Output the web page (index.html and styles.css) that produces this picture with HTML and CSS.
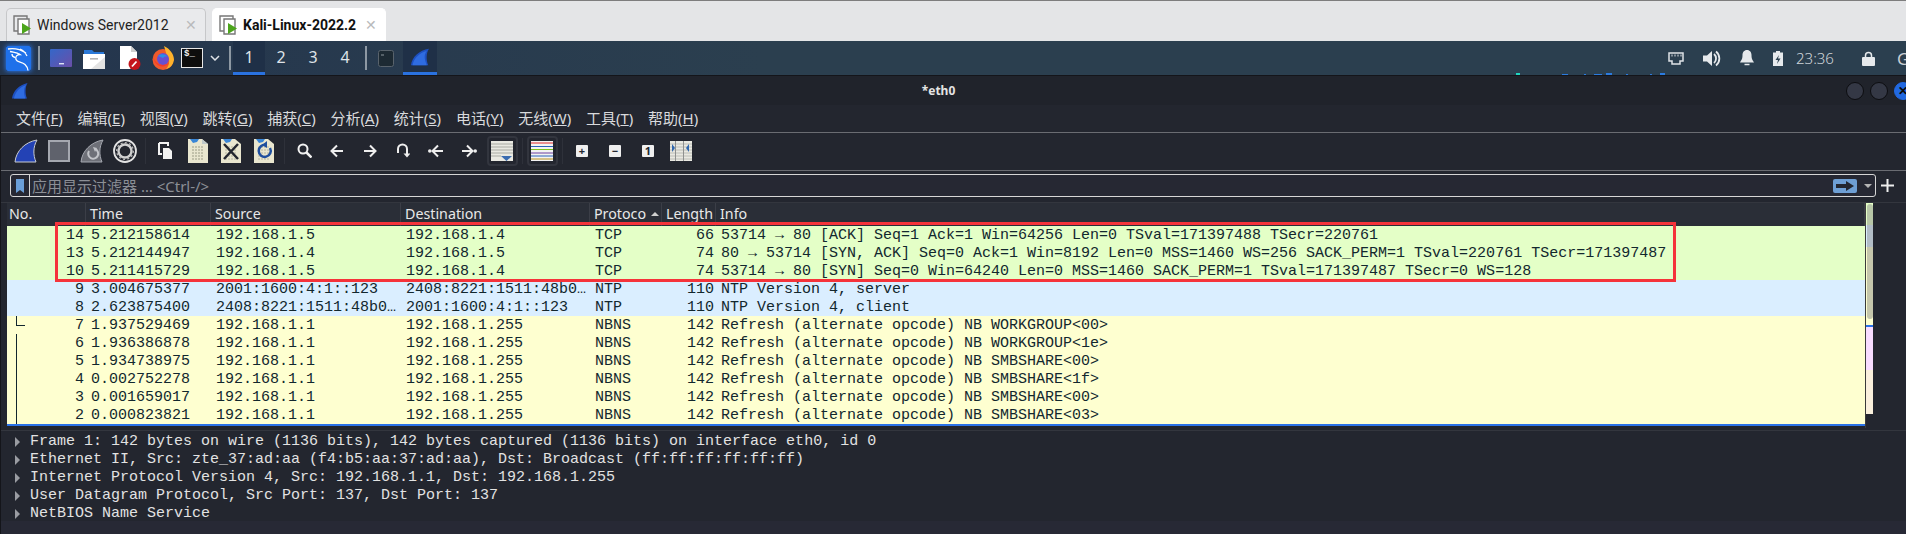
FILE: index.html
```html
<!DOCTYPE html>
<html lang="en">
<head>
    <meta charset="UTF-8" />
    <meta name="viewport" content="width=device-width, initial-scale=1" />
    <title>Kali-Linux-2022.2 - eth0</title>
    <link rel="stylesheet" href="styles.css">
</head>
<body>

    <!-- VM tabs -->
    <div class="vm-tabs">
        <div class="vm-tab">
            <svg class="vm-icon" viewBox="0 0 20 20"><path d="M5 16H1V1h13v3" fill="none" stroke="#777" stroke-width="1.4"/><path d="M5 4h11v15H5z" fill="#fff" stroke="#777" stroke-width="1.4"/><path d="M9 8l9 5.5-9 5.5z" fill="#4ca51c"/></svg>
            <span class="vm-name">Windows Server2012</span>
            <span class="vm-close">✕</span>
        </div>
        <div class="vm-tab active">
            <svg class="vm-icon" viewBox="0 0 20 20"><path d="M5 16H1V1h13v3" fill="none" stroke="#777" stroke-width="1.4"/><path d="M5 4h11v15H5z" fill="#fff" stroke="#777" stroke-width="1.4"/><path d="M9 8l9 5.5-9 5.5z" fill="#4ca51c"/></svg>
            <span class="vm-name">Kali-Linux-2022.2</span>
            <span class="vm-close">✕</span>
        </div>
    </div>

    <!-- Kali panel -->
    <div class="panel">
        <div class="panel-logo">
            <svg viewBox="0 0 25 25" width="25" height="25"><rect width="25" height="25" rx="2" fill="#1f71ea"/><path d="M2 3c6-1 12 0 18 4M4 5.500c4 1 7 1 10 3-3 0-5 2-4 5 1 3 6 2 9 5 2 2 3 4 3 6M6 8c0 2 1 3 3 3.500M14 3c3 1 5 3 7 7" fill="none" stroke="#fff" stroke-width="1.300"/></svg>
        </div>
        <span class="panel-sep"></span>
        <div class="panel-app">
            <svg viewBox="0 0 22 18" width="22" height="18"><defs><linearGradient id="desk" x1="0" x2="1" y1="0" y2="1"><stop offset="0" stop-color="#3467c9"/><stop offset="1" stop-color="#6a4fa8"/></linearGradient></defs><rect y="0" width="22" height="18" rx="1" fill="url(#desk)"/><rect x="9" y="14" width="5" height="1.4" fill="#dfe4f5"/></svg>
        </div>
        <div class="panel-app">
            <svg viewBox="0 0 22 22" width="22" height="22"><path d="M1 3h8l2 2h10v4H1z" fill="#2b79d8"/><path d="M0 7h22v15H0z" fill="#fff"/><path d="M22 10v12H8z" fill="#e3e3e3"/><rect x="7" y="11" width="8" height="1.6" fill="#b5b5b5"/></svg>
        </div>
        <div class="panel-app shifted">
            <svg viewBox="0 0 22 24" width="22" height="24"><path d="M1 0h11l6 6v17H1z" fill="#fff"/><path d="M12 0l6 6h-6z" fill="#cfcfcf"/><circle cx="15.500" cy="18" r="6" fill="#c4161c"/><path d="M13 20.500l4.500-5" stroke="#fff" stroke-width="1.800"/></svg>
        </div>
        <div class="panel-app">
            <svg viewBox="0 0 22 24" width="22" height="24"><circle cx="11" cy="13.500" r="10.500" fill="#ef5a2c"/><path d="M12 0c6 3 10 8 10 14a11 11 0 0 1-8 9c4-4 4-10 1-13z" fill="#fdb22c"/><circle cx="11" cy="13" r="6" fill="#6a4fd0"/><path d="M6 10c3-3 8-2 10 1-3-1-4 0-5 1z" fill="#2a8fe8"/><path d="M1 11c3 8 10 10 16 6-5 6-14 4-16-6z" fill="#f5392d"/></svg>
        </div>
        <div class="panel-term">$_</div>
        <svg class="panel-chev" viewBox="0 0 10 6" width="10" height="6"><path d="M1 1l4 4 4-4" fill="none" stroke="#dfe3e8" stroke-width="1.500"/></svg>
        <span class="panel-sep"></span>
        <div class="workspaces">
            <span class="workspace current">1</span>
            <span class="workspace">2</span>
            <span class="workspace">3</span>
            <span class="workspace">4</span>
        </div>
        <span class="panel-sep"></span>
        <div class="task">
            <svg viewBox="0 0 16 17" width="16" height="17"><rect x=".5" y=".5" width="15" height="16" rx="2" fill="#1d2a33" stroke="#59636c"/><path d="M3 5h3" stroke="#8d969d"/></svg>
        </div>
        <div class="task open">
            <svg viewBox="0 0 26 24" width="20" height="18"><path d="M1 23C2 12 12 3 25 1c-4 6-4 15-1 22z" fill="#1e50c0"/><path d="M3 23C5 13 13 6 22 4c-5 6-2 13 0 19z" fill="#2f6ce0"/></svg>
        </div>
        <div class="panel-tray">
            <svg viewBox="0 0 16 13" width="16" height="13"><path d="M1 1h14v8h-3v3H4V9H1z" fill="none" stroke="#dfe3e8" stroke-width="1.500"/><path d="M4 2.500v2M7 2.500v2M10 2.500v2M13 2.500v2" stroke="#dfe3e8"/></svg>
            <svg viewBox="0 0 18 17" width="18" height="17"><path d="M0 5.500h4L9 1v15l-5-4.500H0z" fill="#e6e9ec"/><path d="M11 4a6 6 0 0 1 0 9M13 1.500a9 9 0 0 1 0 14" fill="none" stroke="#e6e9ec" stroke-width="1.800"/></svg>
            <svg viewBox="0 0 14 16" width="14" height="16"><path d="M7 0c3 0 4.500 2.500 4.500 5 0 4 1 5 2.500 7.500H0C1.500 10 2.500 9 2.500 5 2.500 2.500 4 0 7 0z" fill="#e6e9ec"/><path d="M4.500 14.500h5" stroke="#e6e9ec" stroke-width="1.500"/></svg>
            <svg viewBox="0 0 10 15" width="10" height="15"><path d="M3 0h4v1.500h3V15H0V1.500h3z" fill="#e6e9ec"/><path d="M6 4L2.500 9H5l-1 4 3.500-5.500H5z" fill="#2b3f4e"/></svg>
            <span class="clock">23:36</span>
            <span class="panel-sep"></span>
            <svg viewBox="0 0 13 15" width="13" height="15"><path d="M3.500 7V4.500a3 3 0 0 1 6 0V7" fill="none" stroke="#e6e9ec" stroke-width="1.500"/><rect y="6" width="13" height="9" rx="1" fill="#e6e9ec"/></svg>
            <span class="user">G</span>
        </div>
        <!-- bits of desktop wallpaper showing under the panel -->
        <svg class="wallpaper-bits" viewBox="0 0 150 2" width="150" height="2"><path d="M0 0h4v2H0z" fill="#1fd6c0"/><path d="M46 1h6v1h-6zM68 1h2v1h-2zM78 1h8v1h-8zM90 0h6v2h-6zM110 1h2v1h-2zM134 1h2v1h-2zM144 0h5v2h-5z" fill="#2b7be0"/></svg>
    </div>

    <!-- Wireshark window -->
    <div class="window">
        <div class="titlebar">
            <svg class="title-icon" viewBox="0 0 16 16" width="16" height="16"><path d="M0 15.500C1 8 7 2 15.500 0c-2.500 4-2.500 11-.5 15.500z" fill="#1e50c0"/><path d="M2 15.500C3 9 8 4 14 2c-3 4-2 10-.5 13.500z" fill="#2f6ce0"/></svg>
            <span class="title-text">*eth0</span>
            <div class="title-buttons">
                <span class="win-btn"></span>
                <span class="win-btn"></span>
                <span class="win-btn close">✕</span>
            </div>
        </div>

        <div class="menubar">
            <span>文件(<u>F</u>)</span>
            <span>编辑(<u>E</u>)</span>
            <span>视图(<u>V</u>)</span>
            <span>跳转(<u>G</u>)</span>
            <span>捕获(<u>C</u>)</span>
            <span>分析(<u>A</u>)</span>
            <span>统计(<u>S</u>)</span>
            <span>电话(<u>Y</u>)</span>
            <span>无线(<u>W</u>)</span>
            <span>工具(<u>T</u>)</span>
            <span>帮助(<u>H</u>)</span>
        </div>

        <div class="toolbar">
            <div class="tool-group">
                <span class="tool"><svg viewBox="0 0 24 24" width="24" height="24"><path d="M1 23C2 12 11 3 23 1c-4 7-4 15-1 22z" fill="#2342b5" stroke="#c9ccd2"/></svg></span>
                <span class="tool"><svg viewBox="0 0 22 22" width="22" height="22"><rect x="1" y="1" width="20" height="20" fill="#5f626c" stroke="#a5a8b0" stroke-width="2"/></svg></span>
                <span class="tool"><svg viewBox="0 0 24 24" width="24" height="24"><path d="M1 23C2 12 11 3 23 1c-4 7-4 15-1 22z" fill="#6e7078" stroke="#a5a8b0"/><path d="M15 10a5 5 0 1 1-6 2" fill="none" stroke="#c2c4c9" stroke-width="2"/><path d="M13 8l4 1-2 4z" fill="#c2c4c9"/></svg></span>
                <span class="tool"><svg viewBox="0 0 24 24" width="24" height="24"><circle cx="12" cy="12" r="11" fill="none" stroke="#e4e4e4" stroke-width="1.800"/><circle cx="12" cy="12" r="6.500" fill="none" stroke="#d0d0d0" stroke-width="2.400"/><circle cx="12" cy="12" r="8.300" fill="none" stroke="#b5b5b5" stroke-width="1.400" stroke-dasharray="2 2.300"/></svg></span>
            </div>
            <span class="tool-sep"></span>
            <div class="tool-group">
                <span class="tool"><svg viewBox="0 0 15 17" width="15" height="17"><path d="M1 1h9v3M1 1v11h3" fill="none" stroke="#f2f2f2" stroke-width="2"/><path d="M5 6h6l3 3v8H5z" fill="#f2f2f2"/></svg></span>
                <span class="tool"><svg viewBox="0 0 20 24" width="20" height="24"><path d="M0 0h14l6 5v19H0z" fill="#e9e6cf"/><path d="M2 0h9l-2 3-4 1z" fill="#3a86d6"/><path d="M14 0l6 5h-6z" fill="#bfc9c9"/><path d="M4 8h12M4 11h12M4 14h12M4 17h12M4 20h12" stroke="#9c9c86" stroke-dasharray="2 1"/></svg></span>
                <span class="tool"><svg viewBox="0 0 20 24" width="20" height="24"><path d="M0 0h14l6 5v19H0z" fill="#e9e6cf"/><path d="M2 0h9l-2 3-4 1z" fill="#3a86d6"/><path d="M4 8h12M4 11h12M4 14h12M4 17h12M4 20h12" stroke="#b5b5a0" stroke-dasharray="2 1"/><path d="M3 5l14 15M17 5L3 20" stroke="#23262f" stroke-width="2.500"/></svg></span>
                <span class="tool"><svg viewBox="0 0 20 24" width="20" height="24"><path d="M0 0h14l6 5v19H0z" fill="#e9e6cf"/><path d="M2 0h9l-2 3-4 1z" fill="#3a86d6"/><path d="M4 8h12M4 11h12M4 14h12M4 17h12M4 20h12" stroke="#b5b5a0" stroke-dasharray="2 1"/><path d="M12 6a6 6 0 1 0 4 3" fill="none" stroke="#1f4f9e" stroke-width="2.500"/><path d="M8 6l5-4v7z" fill="#1f4f9e"/></svg></span>
            </div>
            <span class="tool-sep"></span>
            <div class="tool-group">
                <span class="tool"><svg viewBox="0 0 15 15" width="15" height="15"><circle cx="6" cy="6" r="4.500" fill="none" stroke="#f2f2f2" stroke-width="2"/><path d="M9.500 9.500l5 5" stroke="#f2f2f2" stroke-width="2.500"/></svg></span>
                <span class="tool"><svg viewBox="0 0 14 14" width="14" height="14"><path d="M13 7H2M7 1.500L1.500 7 7 12.500" fill="none" stroke="#eee" stroke-width="2"/></svg></span>
                <span class="tool"><svg viewBox="0 0 14 14" width="14" height="14"><path d="M1 7h11M7 1.500L12.500 7 7 12.500" fill="none" stroke="#eee" stroke-width="2"/></svg></span>
                <span class="tool"><svg viewBox="0 0 14 15" width="14" height="15"><path d="M2 10V6a4.500 4.500 0 0 1 9 0v5" fill="none" stroke="#eee" stroke-width="2"/><path d="M7.500 10.500h7L11 14.500z" fill="#eee"/></svg></span>
                <span class="tool"><svg viewBox="0 0 16 14" width="16" height="14"><circle cx="1.800" cy="7" r="1.800" fill="#eee"/><path d="M15 7H5M10 1.500L4.500 7l5.500 5.500" fill="none" stroke="#eee" stroke-width="2"/></svg></span>
                <span class="tool"><svg viewBox="0 0 16 14" width="16" height="14"><circle cx="14.200" cy="7" r="1.800" fill="#eee"/><path d="M1 7h10M6 1.500L11.500 7 6 12.500" fill="none" stroke="#eee" stroke-width="2"/></svg></span>
            </div>
            <span class="tool boxed"><svg viewBox="0 0 22 20" width="22" height="20"><rect width="22" height="20" fill="#e9e9e2"/><path d="M0 3h22M0 6h22M0 9h22M0 12h22M0 15h10" stroke="#a9aba4"/><path d="M10 15h11l-5.500 5z" fill="#3a6cb0"/></svg></span>
            <span class="tool-sep"></span>
            <span class="tool boxed"><svg viewBox="0 0 22 20" width="22" height="20"><rect width="22" height="20" fill="#f3f3f3"/><path d="M0 2h22" stroke="#e2282c"/><path d="M0 5.500h22" stroke="#2b62b8"/><path d="M0 8.500h22" stroke="#7cc21c"/><path d="M0 12h22" stroke="#6b3fa0"/><path d="M0 15h22" stroke="#2b62b8"/><path d="M0 18h22" stroke="#b8901c"/></svg></span>
            <span class="tool-sep"></span>
            <div class="tool-group">
                <span class="tool"><span class="zoom-key">+</span></span>
                <span class="tool"><span class="zoom-key">−</span></span>
                <span class="tool"><span class="zoom-key">1</span></span>
                <span class="tool"><svg viewBox="0 0 22 20" width="22" height="20"><rect width="22" height="20" fill="#e9e9e2"/><path d="M0 3h22M0 6h22M0 9h22M0 12h22M0 15h22M0 18h22" stroke="#bcbdb6"/><path d="M5.500 0v20M13.500 0v20" stroke="#8f9190"/><path d="M2 3v8l3-4zM19 3v8l-3-4z" fill="#2f66ad"/></svg></span>
            </div>
        </div>

        <div class="filter-row">
            <div class="filter-box">
                <span class="filter-mark"><svg viewBox="0 0 8 14" width="8" height="14"><path d="M0 0h8v14l-4-3-4 3z" fill="#6a9fd8"/></svg></span>
                <span class="filter-hint">应用显示过滤器 … &lt;Ctrl-/&gt;</span>
                <span class="filter-apply"><svg viewBox="0 0 18 10" width="18" height="10"><path d="M0 3h10V0l8 5-8 5V7H0z" fill="#23262f"/></svg></span>
                <span class="filter-drop"></span>
            </div>
            <svg class="filter-add" viewBox="0 0 13 13" width="13" height="13"><path d="M6.500 0v13M0 6.500h13" stroke="#eee" stroke-width="2"/></svg>
        </div>

        <div class="packets">
            <div class="packet-list">
                <div class="cols head">
                    <span>No.</span>
                    <span>Time</span>
                    <span>Source</span>
                    <span>Destination</span>
                    <span class="sorted">Protoco</span>
                    <span>Length</span>
                    <span>Info</span>
                </div>
                <div class="cols row tcp"><span class="num">14</span><span>5.212158614</span><span>192.168.1.5</span><span>192.168.1.4</span><span>TCP</span><span class="num">66</span><span>53714 → 80 [ACK] Seq=1 Ack=1 Win=64256 Len=0 TSval=171397488 TSecr=220761</span></div>
                <div class="cols row tcp"><span class="num">13</span><span>5.212144947</span><span>192.168.1.4</span><span>192.168.1.5</span><span>TCP</span><span class="num">74</span><span>80 → 53714 [SYN, ACK] Seq=0 Ack=1 Win=8192 Len=0 MSS=1460 WS=256 SACK_PERM=1 TSval=220761 TSecr=171397487</span></div>
                <div class="cols row tcp"><span class="num">10</span><span>5.211415729</span><span>192.168.1.5</span><span>192.168.1.4</span><span>TCP</span><span class="num">74</span><span>53714 → 80 [SYN] Seq=0 Win=64240 Len=0 MSS=1460 SACK_PERM=1 TSval=171397487 TSecr=0 WS=128</span></div>
                <div class="cols row ntp"><span class="num">9</span><span>3.004675377</span><span>2001:1600:4:1::123</span><span>2408:8221:1511:48b0…</span><span>NTP</span><span class="num">110</span><span>NTP Version 4, server</span></div>
                <div class="cols row ntp"><span class="num">8</span><span>2.623875400</span><span>2408:8221:1511:48b0…</span><span>2001:1600:4:1::123</span><span>NTP</span><span class="num">110</span><span>NTP Version 4, client</span></div>
                <div class="cols row nbns"><span class="num tree-end">7</span><span>1.937529469</span><span>192.168.1.1</span><span>192.168.1.255</span><span>NBNS</span><span class="num">142</span><span>Refresh (alternate opcode) NB WORKGROUP&lt;00&gt;</span></div>
                <div class="cols row nbns"><span class="num tree-mid">6</span><span>1.936386878</span><span>192.168.1.1</span><span>192.168.1.255</span><span>NBNS</span><span class="num">142</span><span>Refresh (alternate opcode) NB WORKGROUP&lt;1e&gt;</span></div>
                <div class="cols row nbns"><span class="num tree-mid">5</span><span>1.934738975</span><span>192.168.1.1</span><span>192.168.1.255</span><span>NBNS</span><span class="num">142</span><span>Refresh (alternate opcode) NB SMBSHARE&lt;00&gt;</span></div>
                <div class="cols row nbns"><span class="num tree-mid">4</span><span>0.002752278</span><span>192.168.1.1</span><span>192.168.1.255</span><span>NBNS</span><span class="num">142</span><span>Refresh (alternate opcode) NB SMBSHARE&lt;1f&gt;</span></div>
                <div class="cols row nbns"><span class="num tree-mid">3</span><span>0.001659017</span><span>192.168.1.1</span><span>192.168.1.255</span><span>NBNS</span><span class="num">142</span><span>Refresh (alternate opcode) NB SMBSHARE&lt;00&gt;</span></div>
                <div class="cols row nbns"><span class="num tree-mid">2</span><span>0.000823821</span><span>192.168.1.1</span><span>192.168.1.255</span><span>NBNS</span><span class="num">142</span><span>Refresh (alternate opcode) NB SMBSHARE&lt;03&gt;</span></div>
                <div class="selection"></div>
                <div class="highlight-box"></div>
            </div>
            <div class="minimap">
                <span class="map-green"></span>
                <span class="map-blue"></span>
                <span class="map-yellow"></span>
                <span class="map-line"></span>
                <span class="map-pink"></span>
                <span class="map-tan"></span>
                <span class="map-handle"></span>
            </div>
        </div>

        <div class="details">
            <div class="detail"><i></i>Frame 1: 142 bytes on wire (1136 bits), 142 bytes captured (1136 bits) on interface eth0, id 0</div>
            <div class="detail"><i></i>Ethernet II, Src: zte_37:ad:aa (f4:b5:aa:37:ad:aa), Dst: Broadcast (ff:ff:ff:ff:ff:ff)</div>
            <div class="detail"><i></i>Internet Protocol Version 4, Src: 192.168.1.1, Dst: 192.168.1.255</div>
            <div class="detail"><i></i>User Datagram Protocol, Src Port: 137, Dst Port: 137</div>
            <div class="detail"><i></i>NetBIOS Name Service</div>
        </div>
        <div class="statusbar"></div>
    </div>

</body>
</html>
```

FILE: styles.css
```css
html, body {
    margin: 0;
    height: 534px;
    overflow: hidden;
}

body {
    width: 1906px;
    background: #23262f;
    font-family: "Noto Sans", "Noto Sans CJK SC", sans-serif;
    display: flex;
    flex-direction: column;
}

svg {
    display: block;
    flex: none;
}

/* VM tabs */
.vm-tabs {
    height: 40px;
    flex: none;
    display: flex;
    align-items: flex-end;
    gap: 6px;
    padding-left: 6px;
    background: #e4e5e7;
    border-top: 1px solid #7d7d7d;
}

.vm-tab {
    height: 33px;
    width: 200px;
    display: flex;
    align-items: center;
    box-sizing: border-box;
    padding-left: 6px;
    padding-right: 4px;
    background: #e9eaec;
    border: 1px solid #c6c7c9;
    border-bottom: none;
    border-radius: 5px 5px 0 0;
    font-family: Roboto, sans-serif;
    font-size: 14px;
    color: #222;
}

.vm-tab.active {
    width: 174px;
    background: #fff;
    border-color: #fff;
    font-weight: bold;
    color: #111;
}

.vm-icon {
    width: 20px;
    height: 20px;
    margin-right: 4px;
}

.vm-name {
    flex: 1;
    white-space: nowrap;
}

.vm-close {
    width: 20px;
    text-align: center;
    color: #b9babc;
    font-size: 14px;
    font-weight: normal;
}

/* Kali panel */
.panel {
    height: 34px;
    flex: none;
    display: flex;
    align-items: center;
    box-sizing: border-box;
    padding-left: 6px;
    position: relative;
    background: linear-gradient(90deg, #24354d, #2b3f4f 40%);
    color: #e6e9ec;
}

.panel-logo {
    width: 25px;
    height: 25px;
    box-shadow: 0 0 5px #2f80ff;
}

.panel-sep {
    width: 2px;
    height: 24px;
    margin: 0 4px 0 7px;
    background: #8d98a3;
}

.panel-app {
    width: 33px;
    display: flex;
    justify-content: center;
}

.panel-app.shifted {
    margin-left: 3px;
}

.panel-term {
    width: 22px;
    height: 20px;
    box-sizing: border-box;
    margin-left: 2px;
    padding-left: 2px;
    background: #0d0d0d;
    border: 1px solid #e8e8e8;
    font: bold 9px/11px "Liberation Mono", monospace;
    color: #eee;
}

.panel-chev {
    margin: 0 2px 0 7px;
}

.workspaces {
    display: flex;
    height: 34px;
    margin: 0 -3px 0 -2px;
}

.workspace {
    width: 32px;
    line-height: 32px;
    text-align: center;
    font-size: 16px;
    color: #dfe3e8;
}

.workspace.current {
    background: #1f3047;
    border-bottom: 3px solid #2a72e0;
    height: 31px;
}

.task {
    width: 34px;
    height: 34px;
    box-sizing: border-box;
    display: flex;
    align-items: center;
    justify-content: center;
    margin-left: -2px;
}

.task.open {
    margin-left: 0;
    background: #1f3047;
    border-bottom: 3px solid #2a72e0;
}

.panel-tray {
    margin-left: auto;
    display: flex;
    align-items: center;
    gap: 19px;
    width: 238px;
    overflow: hidden;
    flex: none;
}

.clock {
    font-size: 15px;
    font-weight: 300;
    color: #cfd5da;
    margin-left: -6px;
}

.panel-tray .panel-sep {
    margin: 0 -4px 0 -6px;
}

.user {
    font-size: 17px;
    color: #c9ced3;
    margin-left: 3px;
}

.wallpaper-bits {
    position: absolute;
    left: 1516px;
    bottom: 0;
}

/* Wireshark window */
.window {
    flex: 1;
    display: flex;
    flex-direction: column;
    position: relative;
    background: #23262f;
    border-top: 1px solid #14151a;
    border-left: 1px solid #14151a;
}

.window::before {
    content: "";
    position: absolute;
    left: 1px;
    top: 0;
    border-top: 4px solid #2a72e0;
    border-right: 4px solid transparent;
}

.titlebar {
    height: 29px;
    flex: none;
    display: flex;
    align-items: center;
    position: relative;
    padding-left: 11px;
    background: #20232b;
}

.title-text {
    position: absolute;
    left: 0;
    right: 0;
    text-align: center;
    font-size: 12px;
    font-weight: bold;
    color: #e4e4e4;
    padding-right: 30px;
}

.title-buttons {
    margin-left: auto;
    display: flex;
    gap: 6px;
    margin-right: -6px;
}

.win-btn {
    width: 16px;
    height: 16px;
    border-radius: 50%;
    background: #343845;
    border: 1px solid #0c0d10;
    font-size: 12px;
    line-height: 16px;
    text-align: center;
    font-weight: bold;
    color: #0a0a0a;
}

.win-btn.close {
    background: #2168e0;
    border-color: #2168e0;
}

.menubar {
    height: 27px;
    box-sizing: border-box;
    padding: 0 0 2px 15px;
    flex: none;
    display: flex;
    align-items: center;
    gap: 14.750px;
    font-size: 15px;
    color: #d9dadc;
    border-bottom: 0;
    box-shadow: inset 0 0 0 0 transparent;
}

.toolbar {
    height: 39px;
    flex: none;
    display: flex;
    align-items: center;
    box-sizing: border-box;
    padding: 0 0 2px 8.500px;
    border-top: 1px solid #6a6c72;
    border-bottom: 1px solid #6a6c72;
}

.tool-group {
    display: flex;
}

.tool {
    width: 33px;
    height: 30px;
    display: flex;
    align-items: center;
    justify-content: center;
    flex: none;
}

.tool.boxed {
    box-sizing: border-box;
    border: 2px solid #32353e;
    border-radius: 4px;
    width: 31px;
    margin: 0 1px;
}

.tool-sep {
    width: 1px;
    height: 26px;
    margin: 0 3px;
    background: #2e313a;
    flex: none;
}

.zoom-key {
    width: 12px;
    height: 12px;
    border-radius: 1px;
    background: #efefef;
    color: #23262f;
    font-size: 11px;
    line-height: 12px;
    font-weight: bold;
    text-align: center;
}

.filter-row {
    height: 32px;
    flex: none;
    display: flex;
    align-items: center;
    box-sizing: border-box;
    padding: 0 0 2px 9px;
    border-bottom: 1px solid #33363e;
}

.filter-box {
    width: 1866px;
    height: 23px;
    flex: none;
    display: flex;
    align-items: center;
    box-sizing: border-box;
    background: #262833;
    border: 1px solid #d6d6d6;
    border-radius: 3px;
}

.filter-mark {
    width: 18px;
    height: 21px;
    flex: none;
    display: flex;
    align-items: center;
    justify-content: center;
    border-right: 1px solid #d6d6d6;
}

.filter-hint {
    flex: 1;
    margin-left: 2px;
    font-size: 15px;
    color: #8c8f96;
}

.filter-apply {
    width: 24px;
    height: 14px;
    display: flex;
    align-items: center;
    justify-content: center;
    border-radius: 2px;
    background: #6e9fd4;
}

.filter-drop {
    width: 0;
    height: 0;
    margin: 0 3px 0 7px;
    border: 4px solid transparent;
    border-top: 4px solid #b5b5b5;
    border-bottom: none;
}

.filter-add {
    margin-left: 5px;
}

/* Packet list */
.packets {
    height: 225px;
    flex: none;
    display: flex;
    padding-left: 6px;
}

.packet-list {
    width: 1858px;
    flex: none;
    position: relative;
    border-right: 1px solid #3a3a3a;
}

.cols {
    display: grid;
    grid-template-columns: 79px 125px 190px 189px 72px 54px 1fr;
    white-space: nowrap;
}

.head {
    height: 23px;
    background: #2a2e37;
    font-size: 14.250px;
    line-height: 22px;
    color: #e8e8e8;
}

.head span {
    padding-left: 4px;
    border-right: 1px solid #3b3e47;
}

.head span:first-child {
    padding-left: 2px;
}

.head .sorted::after {
    content: "";
    display: inline-block;
    margin-left: 5px;
    vertical-align: 3px;
    border: 4px solid transparent;
    border-bottom: 4px solid #cfcfcf;
    border-top: none;
}

.row {
    height: 18px;
    font: 15px/20px "Liberation Mono", monospace;
    color: #12272e;
}

.row span {
    padding-left: 5px;
    height: 18px;
    overflow: hidden;
}

.row .num {
    padding-left: 0;
    padding-right: 2px;
    text-align: right;
}

.tcp {
    background: #e4ffc7;
}

.ntp {
    background: #daeeff;
}

.nbns {
    background: #feffd0;
}

/* related-packet tree in the No. column */
.tree-end, .tree-mid {
    position: relative;
}

.tree-end::before {
    content: "";
    position: absolute;
    left: 9px;
    top: 0;
    width: 8px;
    height: 9px;
    border-left: 1px solid #12272e;
    border-bottom: 1px solid #12272e;
}

.tree-mid::before {
    content: "";
    position: absolute;
    left: 9px;
    top: 0;
    bottom: 0;
    border-left: 1px solid #12272e;
}

.selection {
    height: 2px;
    background: #2a72e8;
}

.highlight-box {
    position: absolute;
    left: 48px;
    top: 19px;
    width: 1615px;
    height: 54px;
    border: 3px solid #f5333a;
}

.minimap {
    width: 7px;
    height: 211px;
    position: relative;
    display: flex;
    flex-direction: column;
}

.map-green {
    height: 22px;
    background: #e4ffc7;
}

.map-blue {
    height: 22px;
    background: #daeeff;
}

.map-yellow {
    height: 78px;
    background: #feffd0;
}

.map-line {
    height: 2px;
    background: #2a72e8;
}

.map-pink {
    height: 43px;
    background: #f8dcff;
}

.map-tan {
    height: 44px;
    background: #faf0dd;
}

.map-handle {
    position: absolute;
    left: 1px;
    right: 0;
    top: 1px;
    height: 115px;
    border-radius: 3px;
    background: rgba(128, 128, 128, 0.45);
}

/* Packet details */
.details {
    height: 91px;
    flex: none;
    padding-top: 2px;
    box-sizing: border-box;
    border-top: 1px solid #33363e;
    margin-top: 2px;
}

.detail {
    height: 18px;
    display: flex;
    align-items: center;
    font: 15px/18px "Liberation Mono", monospace;
    color: #e2e2e2;
    white-space: nowrap;
}

.detail i {
    width: 0;
    height: 0;
    margin: 0 10px 0 14px;
    border: 5px solid transparent;
    border-left: 5px solid #9a9ca2;
    border-right: none;
}

.statusbar {
    flex: 1;
    background: #272935;
}
```
